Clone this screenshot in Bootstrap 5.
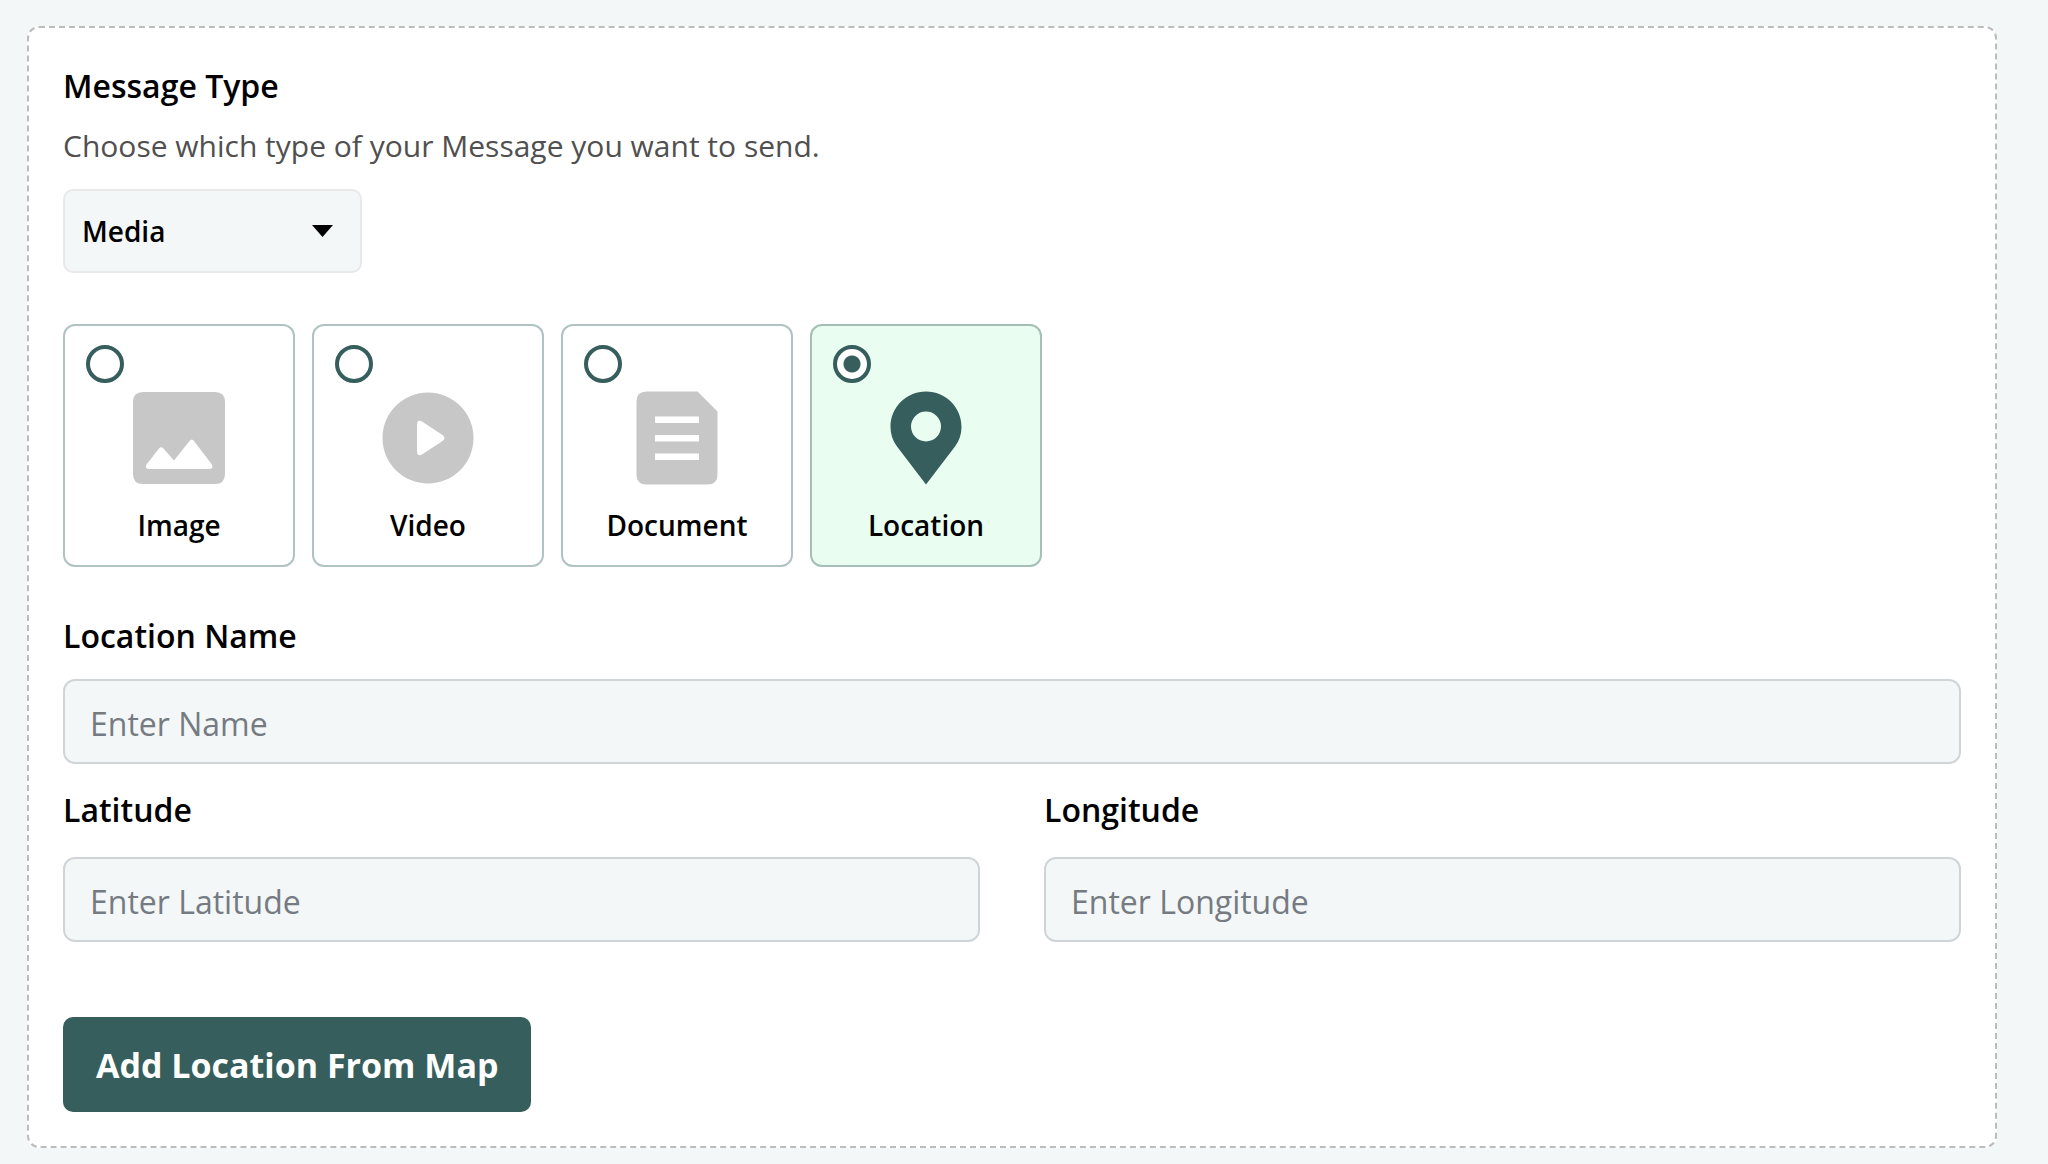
<!DOCTYPE html>
<html lang="en">
<head>
<meta charset="utf-8">
<meta name="viewport" content="width=device-width, initial-scale=1">
<title>Message Type</title>
<link href="https://cdn.jsdelivr.net/npm/bootstrap@5.3.0/dist/css/bootstrap.min.css" rel="stylesheet">
<style>
  :root { --brand: #365e5c; --tint: #f3f7f8; --idle: #c7c7c7; }
  body { background: var(--tint); color: #000; font-family: "Segoe UI", "Open Sans", "Noto Sans", sans-serif; font-size: 32px; line-height: 44px; }
  .page-wrap { padding: 26px 51px 16px 27px; }
  .panel { background: #fff; border: 2px dashed #bcbcbc; border-radius: 12px; padding: 36px 34px 34px; }
  .field-title { font-size: 32px; line-height: 44px; font-weight: 600; margin: 0; }
  .hint { color: #505050; font-size: 30px; line-height: 44px; margin: 16px 0 21px; }
  .type-select { width: 299px; height: 84px; padding: 0 48px 0 17px; background-color: var(--tint); border: 2px solid #e9e9e9; border-radius: 10px; font-size: 28px; font-weight: 600; color: #000;
    background-image: url("data:image/svg+xml,%3csvg xmlns='http://www.w3.org/2000/svg' viewBox='0 0 21 12'%3e%3cpath d='M0 0h21L10.500 12z'/%3e%3c/svg%3e"); background-size: 21px 12px; background-position: right 27px center; }
  .media-list { gap: 17px; margin: 51px 0 47px; }
  .media-card { position: relative; width: 232px; height: 243px; padding-top: 65px; border: 2px solid #b0c3c2; border-radius: 12px; cursor: pointer; }
  .media-card svg { width: 94px; height: 94px; fill: var(--idle); }
  .media-card .media-name { font-size: 28px; line-height: 40px; font-weight: 600; margin-top: 20px; }
  .media-card .form-check-input { position: absolute; top: 19px; left: 21px; width: 38px; height: 38px; margin: 0; border: 4px solid var(--brand); background-color: #fff; }
  .media-card .form-check-input:checked { background-image: radial-gradient(circle, var(--brand) 8px, #fff 9px); }
  .media-card.selected { background: #eafdf1; border-color: #a5bfb6; }
  .media-card.selected svg { fill: var(--brand); }
  .text-field { height: 85px; padding: 4px 25px 0; font-size: 32px; background-color: var(--tint); border: 2px solid #cfd4d9; border-radius: 12px; }
  .text-field::placeholder { color: #757b81; }
  .field-block .field-title { display: block; margin-bottom: 21px; }
  .coords { --bs-gutter-x: 64px; margin-top: 24px; }
  .coords .field-title { margin-bottom: 25px; }
  .map-btn { margin-top: 75px; height: 95px; padding: 2px 33px 0; border: 0; border-radius: 10px; background: var(--brand); color: #fff; font-size: 34px; font-weight: 700; }
  .map-btn:hover { background: #2b4c4a; color: #fff; }
</style>
<script src="https://cdn.jsdelivr.net/npm/bootstrap@5.3.0/dist/js/bootstrap.bundle.min.js"></script>
</head>
<body>
<main class="page-wrap">
  <form class="panel">
    <label class="field-title d-block" for="messageType">Message Type</label>
    <p class="hint" id="typeHint">Choose which type of your Message you want to send.</p>
    <select class="form-select type-select" id="messageType" aria-describedby="typeHint">
      <option selected>Media</option>
      <option>Text</option>
    </select>

    <div class="media-list d-flex flex-wrap" role="radiogroup" aria-label="Media type">
      <label class="media-card d-flex flex-column align-items-center" for="mediaImage">
        <input class="form-check-input" type="radio" name="media" id="mediaImage">
        <svg viewBox="0 0 94 94" aria-hidden="true"><path fill-rule="evenodd" d="M11 1h72q10 0 10 10v72q0 10-10 10H11Q1 93 1 83V11Q1 1 11 1zM14.500 73.500q-2 4.500 3 4.500h59q6 0 3-5L62 50q-2-3-4.500 0L42 69.500 31.500 57.500q-2.500-2.500-4.500 0z"/></svg>
        <span class="media-name">Image</span>
      </label>
      <label class="media-card d-flex flex-column align-items-center" for="mediaVideo">
        <input class="form-check-input" type="radio" name="media" id="mediaVideo">
        <svg viewBox="0 0 94 94" aria-hidden="true"><path fill-rule="evenodd" d="M47 1.500a45.500 45.500 0 1 1 0 91a45.500 45.500 0 1 1 0-91zM36 34v26q0 6 5 3.500L61.500 50q4-3 0-6L41 30.500q-5-2.500-5 3.500z"/></svg>
        <span class="media-name">Video</span>
      </label>
      <label class="media-card d-flex flex-column align-items-center" for="mediaDocument">
        <input class="form-check-input" type="radio" name="media" id="mediaDocument">
        <svg viewBox="0 0 94 94" aria-hidden="true"><path fill-rule="evenodd" d="M16 .5h51.500L87.500 20.500V83.500q0 10-10 10H16.500q-10 0-10-10V10.500q0-10 10-10zM25 25.500v6.500h44v-6.500zM25 44v6.500h44V44zM25 62.500V69h44v-6.500z"/></svg>
        <span class="media-name">Document</span>
      </label>
      <label class="media-card selected d-flex flex-column align-items-center" for="mediaLocation">
        <input class="form-check-input" type="radio" name="media" id="mediaLocation" checked>
        <svg viewBox="0 0 94 94" aria-hidden="true"><path fill-rule="evenodd" d="M47 .5C66.500.500 82.500 16 82.500 36q0 11-6.500 19.500L47 93.500 18 55.500Q11.500 47 11.500 36C11.500 16 27.500.500 47 .500zM47 20.500a15 15 0 1 0 0 30a15 15 0 1 0 0-30z"/></svg>
        <span class="media-name">Location</span>
      </label>
    </div>

    <div class="field-block">
      <label class="field-title" for="locationName">Location Name</label>
      <input class="form-control text-field" type="text" id="locationName" placeholder="Enter Name">
    </div>
    <div class="row coords">
      <div class="col field-block">
        <label class="field-title" for="latitude">Latitude</label>
        <input class="form-control text-field" type="text" id="latitude" placeholder="Enter Latitude">
      </div>
      <div class="col field-block">
        <label class="field-title" for="longitude">Longitude</label>
        <input class="form-control text-field" type="text" id="longitude" placeholder="Enter Longitude">
      </div>
    </div>
    <button class="btn map-btn" type="button">Add Location From Map</button>
  </form>
</main>
</body>
</html>
